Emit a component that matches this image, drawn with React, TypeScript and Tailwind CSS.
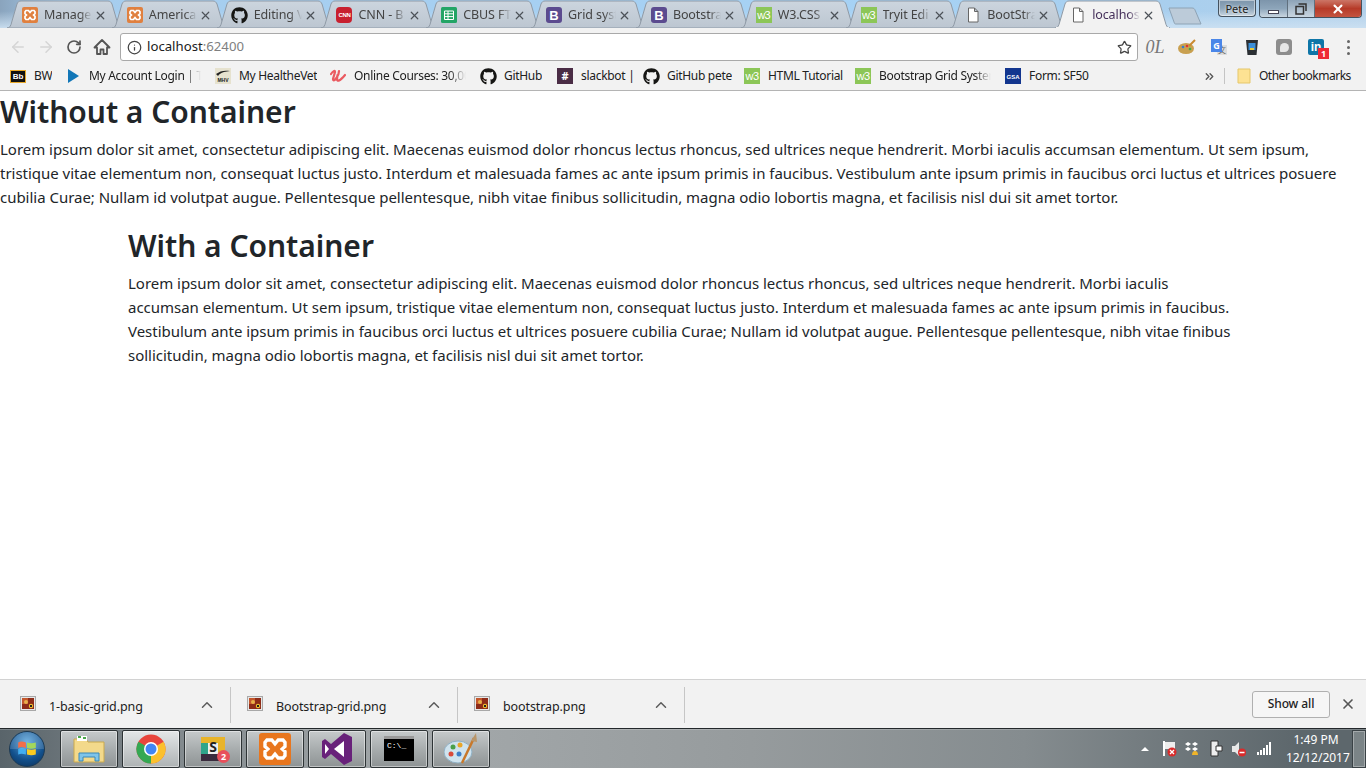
import React from "react";
import { ArrowLeft, ArrowRight, RotateCw, Info, Star, ChevronUp, X, ChevronsRight } from "lucide-react";
import { FaGithub } from "react-icons/fa";

const UI = "[font-family:'Noto_Sans','Liberation_Sans',sans-serif]";

function Xampp({ size = 16 }: { size?: number }) {
  return (
    <svg width={size} height={size} viewBox="0 0 16 16" className="shrink-0">
      <rect width="16" height="16" rx="2" fill="#e0803f" />
      <path d="M4 3.500h2.400L8 5.400 9.600 3.500H12l1 1.200v2L11.600 8l1.400 1.300v2l-1 1.200H9.600L8 10.600 6.400 12.500H4l-1-1.200v-2L4.400 8 3 6.700v-2z" fill="none" stroke="#fff" strokeWidth="1.700" />
    </svg>
  );
}
function Cnn() {
  return (
    <div className="w-4 h-4 bg-[#c8202f] rounded-sm flex items-center justify-center shrink-0 text-white text-[6px] font-bold leading-none tracking-tighter [font-family:'Liberation_Sans',sans-serif]">CNN</div>
  );
}
function Sheets() {
  return (
    <svg width="16" height="16" viewBox="0 0 16 16" className="shrink-0">
      <rect width="16" height="16" rx="1.500" fill="#23a566" />
      <path d="M3.500 4h9v8.500h-9zM3.500 6.800h9M3.500 9.600h9M7 4v8.500" fill="none" stroke="#fff" strokeWidth="1" />
    </svg>
  );
}
function Boot() {
  return (
    <div className="w-4 h-4 bg-[#5b4b8f] rounded-[3px] flex items-center justify-center shrink-0 text-white text-[13px] font-bold leading-none [font-family:'Liberation_Sans',sans-serif]">B</div>
  );
}
function W3() {
  return (
    <div className="w-4 h-4 bg-[#8cc657] flex items-center justify-center shrink-0 text-white text-[11px] leading-none tracking-tighter [font-family:'Liberation_Sans',sans-serif]">w3</div>
  );
}
function FileIco() {
  return (
    <svg width="16" height="16" viewBox="0 0 16 16" className="shrink-0">
      <path d="M3.500 1h6l3.500 3.500V15h-9.500z M9.500 1v3.500H13" fill="#fff" stroke="#666" strokeWidth="1" />
    </svg>
  );
}
function Git() {
  return <FaGithub size={17} className="shrink-0 text-[#161614]" />;
}

const tabs: { t: string; i: React.ReactNode }[] = [
  { t: "Manage", i: <Xampp /> },
  { t: "America", i: <Xampp /> },
  { t: "Editing V", i: <Git /> },
  { t: "CNN - B", i: <Cnn /> },
  { t: "CBUS FT", i: <Sheets /> },
  { t: "Grid syst", i: <Boot /> },
  { t: "Bootstra", i: <Boot /> },
  { t: "W3.CSS", i: <W3 /> },
  { t: "Tryit Edi", i: <W3 /> },
  { t: "BootStra", i: <FileIco /> },
];

function Tab({ t, i, active }: { t: string; i: React.ReactNode; active?: boolean }) {
  return (
    <div className="relative w-[115px] h-[28px] shrink-0 -ml-[10.2px] first:ml-0">
      <svg width="115" height="28" viewBox="0 0 115 28" className="absolute inset-0">
        <defs>
          <linearGradient id="tabfill" x1="0" y1="0" x2="0" y2="1">
            <stop offset="0" stopColor="#ccd5de" />
            <stop offset="1" stopColor="#bcc6d1" />
          </linearGradient>
        </defs>
        <path
          d="M0 28 C2 28 3 27 4 24.500 L10 4 C10.800 2 12 1 14 1 H101 C103 1 104 2 105 4 L111 24.500 C112 27 113 28 115 28 Z"
          fill={active ? "#f2f2f2" : "url(#tabfill)"}
          stroke="#8f9aa6"
          strokeWidth="1"
        />
        {active ? <rect x="1" y="27" width="113" height="2" fill="#f2f2f2" /> : null}
      </svg>
      <div className="relative h-full flex items-center pl-[15px] pr-[15px] pt-[2px]">
        <div className="w-4 flex justify-center shrink-0">{i}</div>
        <span className={`ml-[6px] w-[48px] overflow-hidden whitespace-nowrap text-[12.500px] tracking-[-0.1px] leading-[16px] [mask-image:linear-gradient(to_right,black_75%,transparent)] ${active ? "text-[#45305a]" : "text-[#444]"}`}>{t}</span>
        <X size={13} strokeWidth={2.200} className="ml-auto text-[#4c5258]" />
      </div>
    </div>
  );
}

function Mark({ w, i, t, fade }: { w: number; i: React.ReactNode; t: string; fade?: boolean }) {
  return (
    <div className="flex items-center shrink-0" style={{ width: w }}>
      <div className="w-4 h-4 flex items-center justify-center shrink-0">{i}</div>
      <span className={`ml-2 whitespace-nowrap text-[12px] tracking-[-0.3px] text-[#202020] overflow-hidden ${fade ? "flex-1 mr-[14px] [mask-image:linear-gradient(to_right,black_85%,transparent)]" : ""}`}>{t}</span>
    </div>
  );
}

function Bar({ name, w, pad }: { name: string; w: number; pad: number }) {
  return (
    <div className="flex items-center h-[36px] mt-[1px] border-r border-[#c6c6c6] shrink-0" style={{ width: w, paddingLeft: pad }}>
      <svg width="16" height="15" viewBox="0 0 16 15" className="mb-[3px] shrink-0">
        <rect x="0.500" y="0.500" width="15" height="14" fill="#e8e8e8" stroke="#a8a8a8" />
        <rect x="2" y="2" width="12" height="11" fill="#8e2c18" />
        <rect x="2" y="2" width="6" height="6" fill="#c4572c" />
        <circle cx="6" cy="6" r="2" fill="#e9b04a" />
        <circle cx="11" cy="10" r="2.200" fill="#f0c030" />
        <rect x="10" y="9" width="2" height="2" fill="#222" />
      </svg>
      <span className="ml-[13px] text-[12.500px] tracking-[-0.1px] text-[#1c1c1c] whitespace-nowrap mt-[5px]">{name}</span>
      <ChevronUp size={18} strokeWidth={2} className="ml-auto mr-[14px] text-[#5c5c5c]" />
    </div>
  );
}

function TaskBtn({ children, on }: { children: React.ReactNode; on?: boolean }) {
  return (
    <div className={`w-[58px] h-[38px] shrink-0 flex items-center justify-center rounded-[2px] border border-[#2e3436] shadow-[inset_0_0_0_1px_rgba(255,255,255,0.45)] ${on ? "bg-gradient-to-b from-[#e4e7e8] to-[#aeb3b4]" : "bg-gradient-to-b from-[#c6cacb] via-[#a8adae] to-[#8e9394]"}`}>
      {children}
    </div>
  );
}

export default function App() {
  return (
    <div className={`w-[1366px] h-[768px] overflow-hidden flex flex-col bg-white ${UI}`}>
      {/* tab strip */}
      <div className="relative h-[28px] shrink-0 flex pl-[7px] bg-[linear-gradient(to_bottom,rgba(166,208,243,0)_40%,rgba(205,225,242,0.9)),linear-gradient(to_right,#8aa4bd_0px,#a6cdee_60px,#a6d2f5_900px,#a9cfee_1170px,#b2d0ea_1366px)]">
        {tabs.map((x) => (
          <Tab key={x.t} t={x.t} i={x.i} />
        ))}
        <Tab t="localhost" i={<FileIco />} active />
        <svg width="36" height="20" viewBox="0 0 36 20" className="mt-[6px] -ml-[3px] shrink-0">
          <path d="M2 2 H25 C27 2 27.500 3 28 4 L34 18 H9 C8 18 7.500 18 7 16 Z" fill="#bccbd9" stroke="#8ea3b5" />
        </svg>
        <div className="absolute right-[4px] top-0 flex text-white">
          <div className="w-[38px] h-[17px] mr-[3px] rounded-b-[4px] border border-t-0 border-[#44525f] bg-gradient-to-b from-[#7d95ab] via-[#8da5ba] to-[#c9d6e1] shadow-[inset_0_0_0_1px_rgba(255,255,255,0.45)] flex items-center justify-center text-[11px] text-[#222] leading-none [text-shadow:0_0_3px_#fff]">Pete</div>
          <div className="flex h-[18px] rounded-b-[4px] border border-t-0 border-[#44525f] overflow-hidden">
            <div className="w-[28px] bg-gradient-to-b from-[#7d95ab] via-[#8da5ba] to-[#c9d6e1] border-r border-[#60707e] flex items-center justify-center">
              <div className="w-[11px] h-[4px] mt-[6px] bg-white border border-[#445]" />
            </div>
            <div className="w-[27px] bg-gradient-to-b from-[#8da3b7] to-[#c9d6e1] border-r border-[#60707e] flex items-center justify-center">
              <svg width="12" height="12" viewBox="0 0 12 12"><path d="M3.500 1h7.500v7M1 3.500h7.500v7.500H1z" fill="none" stroke="#333" strokeWidth="1.500" /></svg>
            </div>
            <div className="w-[46px] bg-gradient-to-b from-[#cc7566] via-[#b63a28] to-[#c45440] flex items-center justify-center">
              <X size={14} strokeWidth={3.500} />
            </div>
          </div>
        </div>
      </div>

      {/* toolbar */}
      <div className="h-[34px] shrink-0 bg-[#f2f2f2] flex items-center pl-[9px] pt-[4px]">
        <ArrowLeft size={18} strokeWidth={2} className="text-[#d5d5d5]" />
        <ArrowRight size={18} strokeWidth={2} className="ml-[10px] text-[#d5d5d5]" />
        <RotateCw size={16} strokeWidth={2.500} className="ml-[11px] text-[#555]" />
        <svg width="18" height="18" viewBox="0 0 18 18" className="ml-[11px]">
          <path d="M9 2 L1.500 9.500 H4 V16 H7.500 V11.500 H10.500 V16 H14 V9.500 H16.500 Z" fill="none" stroke="#555" strokeWidth="1.800" strokeLinejoin="round" />
        </svg>
        <div className="ml-[9px] w-[1018px] h-[28px] bg-white border border-[#a9a9a9] rounded-[3px] flex items-center pl-[6px]">
          <Info size={15} strokeWidth={2} className="text-[#444]" />
          <span className="ml-[5px] text-[13.200px] text-[#202020]">localhost<span className="text-[#808080]">:62400</span></span>
          <Star size={15} strokeWidth={2} className="ml-auto mr-[5px] text-[#444]" />
        </div>
        <div className="flex items-center ml-[1px]">
          <div className="w-[32px] text-center text-[18px] text-[#777] italic [font-family:'Liberation_Serif',serif] leading-none">0L</div>
          <div className="w-[32px] flex justify-center">
            <svg width="18" height="16" viewBox="0 0 18 16">
              <ellipse cx="8" cy="9.500" rx="8" ry="5.500" fill="#c9a050" />
              <circle cx="5" cy="8" r="1.300" fill="#3a7bc8" />
              <circle cx="9" cy="7" r="1.300" fill="#d33" />
              <circle cx="12" cy="10" r="1.300" fill="#4a4" />
              <path d="M11 7 L17 1" stroke="#c98a30" strokeWidth="2" />
            </svg>
          </div>
          <div className="w-[32px] flex justify-center">
            <div className="relative w-[16px] h-[16px]">
              <div className="absolute right-0 bottom-0 w-[10px] h-[10px] bg-[#ddd] text-[#666] text-[8px] leading-[10px] text-center [font-family:'Noto_Sans_CJK_SC',sans-serif]">文</div>
              <div className="absolute left-0 top-0 w-[11px] h-[13px] bg-[#4a86e8] text-white text-[9px] leading-[13px] text-center font-bold">G</div>
            </div>
          </div>
          <div className="w-[33px] flex justify-center">
            <svg width="14" height="17" viewBox="0 0 14 17">
              <path d="M1 1h12l-1.500 15h-9z" fill="#2b2f33" />
              <rect x="3.500" y="4" width="7" height="7" fill="#3b8fd8" />
              <rect x="5" y="9" width="4" height="2" fill="#e8c93a" />
            </svg>
          </div>
          <div className="w-[32px] flex justify-center">
            <div className="w-4 h-4 rounded-[3px] bg-[#8d8d8d] flex items-center justify-center">
              <div className="w-[9px] h-[9px] rounded-[50%_50%_50%_10%] bg-[#e6e6e6]" />
            </div>
          </div>
          <div className="relative w-[32px] flex justify-center">
            <div className="w-4 h-4 rounded-[2px] bg-[#0e76a8] text-white text-[12px] font-bold leading-[16px] text-center [font-family:'Liberation_Sans',sans-serif]">in</div>
            <div className="absolute left-[18px] top-[9px] w-[11px] h-[11px] bg-[#ee2b37] text-white text-[9px] leading-[11px] text-center font-bold">1</div>
          </div>
          <div className="ml-[15px] flex flex-col gap-[3px]">
            <div className="w-[3px] h-[3px] bg-[#666] rounded-full" />
            <div className="w-[3px] h-[3px] bg-[#666] rounded-full" />
            <div className="w-[3px] h-[3px] bg-[#666] rounded-full" />
          </div>
        </div>
      </div>

      {/* bookmarks */}
      <div className="h-[29px] shrink-0 bg-[#f2f2f2] border-b border-[#b4b4b4] flex items-center pl-[10px]">
        <Mark w={55} t="BW" i={<div className="w-4 h-[13px] bg-[#111] border border-[#e8a92a] text-white text-[8px] font-bold leading-[11px] text-center [font-family:'Liberation_Sans',sans-serif]">Bb</div>} />
        <Mark w={150} fade t="My Account Login | Ti" i={<svg width="12" height="14" viewBox="0 0 12 14"><path d="M1 0l11 7-11 7z" fill="#1277b8" /></svg>} />
        <Mark w={115} t="My HealtheVet" i={
          <div className="relative w-4 h-4 bg-[#e6e2cf] overflow-hidden">
            <svg width="16" height="9" viewBox="0 0 16 9" className="absolute left-0 top-0"><path d="M1 6 C5 3 9 2 15 3 L9 4 C6 5 4 6 3 8z" fill="#222" /></svg>
            <div className="absolute inset-x-0 bottom-0 text-[#222] text-[5px] font-bold leading-[7px] text-center [font-family:'Liberation_Sans',sans-serif]">MHV</div>
          </div>
        } />
        <Mark w={150} fade t="Online Courses: 30,000" i={
          <svg width="16" height="14" viewBox="0 0 16 14"><path d="M1 5 C3 2 5 1 5 3 L3 10 C3 13 6 11 8.500 5 L9 2 M7.500 6 L7 10 C7 13 10 12 15 6" fill="none" stroke="#ea5a60" strokeWidth="2.200" strokeLinecap="round" /></svg>
        } />
        <Mark w={77} t="GitHub" i={<Git />} />
        <Mark w={86} t="slackbot |" i={<div className="w-4 h-4 bg-[#4a2c45] text-white text-[11px] font-bold leading-4 text-center">#</div>} />
        <Mark w={101} t="GitHub pete" i={<Git />} />
        <Mark w={111} t="HTML Tutorial" i={<W3 />} />
        <Mark w={150} fade t="Bootstrap Grid System" i={<W3 />} />
        <Mark w={198} t="Form: SF50" i={<div className="w-4 h-4 bg-[#12358e] text-white text-[6px] font-bold leading-[18px] text-center overflow-hidden [font-family:'Liberation_Sans',sans-serif]">GSA</div>} />
        <ChevronsRight size={13} strokeWidth={2.500} className="text-[#555]" />
        <div className="ml-[8px] h-[16px] border-l border-[#c4c4c4]" />
        <svg width="14" height="16" viewBox="0 0 14 16" className="ml-[12px]"><path d="M1 1h12v14H1z" fill="#fde293" stroke="#e5c76b" /></svg>
        <span className="ml-[8px] text-[12px] tracking-[-0.5px] text-[#202020] whitespace-nowrap">Other bookmarks</span>
      </div>

      {/* page */}
      <main className="flex-1 min-h-0 text-[#212529] text-[15px] tracking-[-0.024px] leading-[24px]">
        <h2 className="text-[30px] font-semibold leading-[38.400px] pt-[2px] mb-[6px] mt-0">Without a Container</h2>
        <p className="mb-[16px]">
          Lorem ipsum dolor sit amet, consectetur adipiscing elit. Maecenas euismod dolor rhoncus lectus rhoncus, sed ultrices neque hendrerit. Morbi iaculis accumsan elementum. Ut sem ipsum, tristique vitae elementum non, consequat luctus justo. Interdum et malesuada fames ac ante ipsum primis in faucibus. Vestibulum ante ipsum primis in faucibus orci luctus et ultrices posuere cubilia Curae; Nullam id volutpat augue. Pellentesque pellentesque, nibh vitae finibus sollicitudin, magna odio lobortis magna, et facilisis nisl dui sit amet tortor.
        </p>
        <div className="w-[1110px] mx-auto">
          <h2 className="text-[30px] font-semibold leading-[38.400px] pt-[2px] mb-[5px]">With a Container</h2>
          <p>
            Lorem ipsum dolor sit amet, consectetur adipiscing elit. Maecenas euismod dolor rhoncus lectus rhoncus, sed ultrices neque hendrerit. Morbi iaculis accumsan elementum. Ut sem ipsum, tristique vitae elementum non, consequat luctus justo. Interdum et malesuada fames ac ante ipsum primis in faucibus. Vestibulum ante ipsum primis in faucibus orci luctus et ultrices posuere cubilia Curae; Nullam id volutpat augue. Pellentesque pellentesque, nibh vitae finibus sollicitudin, magna odio lobortis magna, et facilisis nisl dui sit amet tortor.
          </p>
        </div>
      </main>

      {/* download shelf */}
      <div className="h-[49px] shrink-0 bg-[#f2f2f2] border-t border-[#d2d2d2] flex items-center">
        <Bar name="1-basic-grid.png" w={231} pad={20} />
        <Bar name="Bootstrap-grid.png" w={227} pad={16} />
        <Bar name="bootstrap.png" w={227} pad={16} />
        <div className="ml-auto w-[78px] h-[27px] bg-[#f6f6f6] border border-[#b0b0b0] rounded-[3px] flex items-center justify-center text-[12px] font-medium tracking-[-0.1px] text-[#222]">Show all</div>
        <X size={16} strokeWidth={2.500} className="mx-[10px] text-[#555]" />
      </div>

      {/* taskbar */}
      <div className="h-[40px] shrink-0 border-t border-[#23282b] flex items-center shadow-[inset_0_1px_0_rgba(255,255,255,0.2)] bg-[linear-gradient(to_right,#59646a,#7c8488_10%,#a4a9ab_30%,#969b9d_55%,#858c8f_75%,#5d676c_95%)]">
        <div className="relative ml-[9px] mr-[15px] w-[36px] h-[36px] rounded-full shrink-0 border border-[#1b3a55] bg-[radial-gradient(circle_at_50%_30%,#5ba6de,#12508c_60%,#0d2f55)] flex items-center justify-center overflow-hidden">
          <svg width="22" height="22" viewBox="0 0 20 20">
            <path d="M2 4c2-1 4-1 7 0v5c-3-1-5-1-7 0z" fill="#f0552b" />
            <path d="M10 4c3 1 5 1 8 0v5c-3 1-5 1-8 0z" fill="#93d13f" />
            <path d="M2 10c2-1 4-1 7 0v5c-3-1-5-1-7 0z" fill="#42aef0" />
            <path d="M10 10c3 1 5 1 8 0v5c-3 1-5 1-8 0z" fill="#fbcb1f" />
          </svg>
          <div className="absolute inset-x-0 top-0 h-1/2 bg-white/15" />
        </div>
        <div className="flex gap-[4px]">
          <TaskBtn>
            <svg width="32" height="30" viewBox="0 0 32 30">
              <path d="M1 5h12l2 3h16v20H1z" fill="#f3d98b" stroke="#c9a94f" />
              <rect x="4" y="2" width="10" height="5" fill="#fff" />
              <path d="M5 2h3v2H5zM10 3h3v2h-3z" fill="#4aa84a" />
              <path d="M6 27v-8h20v8h-4v-4H10v4z" fill="#7fc4ea" stroke="#3a88b8" />
            </svg>
          </TaskBtn>
          <TaskBtn on>
            <svg width="30" height="30" viewBox="0 0 30 30">
              <circle cx="15" cy="15" r="14.500" fill="#e8453c" />
              <path d="M15 15 L27.600 7.700 A14.500 14.500 0 0 1 15 29.500z" fill="#fbc02d" />
              <path d="M15 15 L15 29.500 A14.500 14.500 0 0 1 2.400 7.700z" fill="#34a853" />
              <circle cx="15" cy="15" r="7" fill="#fff" />
              <circle cx="15" cy="15" r="5.500" fill="#4285f4" />
            </svg>
          </TaskBtn>
          <TaskBtn>
            <div className="relative w-[26px] h-[28px]">
              <svg width="26" height="26" viewBox="0 0 26 26" className="absolute top-0 left-0">
                <path d="M1 2h7v24H1z" fill="#2fa58a" />
                <path d="M1 2h24v6H1z" fill="#e8b42a" />
                <path d="M18 2h7v24h-7z" fill="#e8b42a" />
                <path d="M1 19h24v7H1z" fill="#3a2c3e" />
                <path d="M8 8h10v11H8z" fill="#eee" />
              </svg>
              <div className="absolute inset-x-0 top-[5px] text-center text-[14px] font-bold text-[#222] leading-none">S</div>
              <div className="absolute -right-[4px] bottom-0 w-[13px] h-[13px] rounded-full bg-[#e8505b] text-white text-[9px] leading-[13px] text-center font-bold">2</div>
            </div>
          </TaskBtn>
          <TaskBtn>
            <svg width="32" height="32" viewBox="0 0 16 16">
              <rect width="16" height="16" rx="1.500" fill="#e8761e" />
              <path d="M4 3.500h2.400L8 5.400 9.600 3.500H12l1 1.200v2L11.600 8l1.400 1.300v2l-1 1.200H9.600L8 10.600 6.400 12.500H4l-1-1.200v-2L4.400 8 3 6.700v-2z" fill="none" stroke="#fff" strokeWidth="1.700" />
            </svg>
          </TaskBtn>
          <TaskBtn>
            <svg width="30" height="32" viewBox="0 0 30 32">
              <path d="M22 0 L30 4 V28 L22 32 L9 21 L3 26 L0 24 V8 L3 6 L9 11z" fill="#68217a" />
              <path d="M22 8 V24 L12 16z M3 11 L7 16 L3 21z" fill="#fff" />
            </svg>
          </TaskBtn>
          <TaskBtn>
            <div className="w-[30px] h-[25px] bg-black border-t-[3px] border-[#9a9a9a] text-white text-[8px] leading-none pt-[3px] pl-[3px] [font-family:'Liberation_Mono',monospace]">C:\_</div>
          </TaskBtn>
          <TaskBtn>
            <svg width="34" height="32" viewBox="0 0 34 32">
              <ellipse cx="14" cy="19" rx="14" ry="11" fill="#cfe3ee" stroke="#8fb0c4" />
              <circle cx="7" cy="21" r="2.500" fill="#d94a3a" />
              <circle cx="9" cy="14" r="2.500" fill="#4aa04a" />
              <circle cx="16" cy="12" r="2.500" fill="#e8a52a" />
              <circle cx="15" cy="21" r="2.500" fill="#3d7fc8" />
              <path d="M18 30 L30 5" stroke="#c8782a" strokeWidth="2.500" />
              <path d="M27 8 L32 0 L33 9z" fill="#b9966a" />
            </svg>
          </TaskBtn>
        </div>
        <div className="ml-auto flex items-center text-white">
          <div className="w-0 h-0 border-x-[4px] border-x-transparent border-b-[4px] border-b-white mr-[12px]" />
          <svg width="17" height="17" viewBox="0 0 17 17" className="mr-[6px]">
            <path d="M3 1v15" stroke="#fff" strokeWidth="2" />
            <path d="M4 2h10v7H4z" fill="#eee" />
            <circle cx="11" cy="12" r="4.500" fill="#d92b2b" />
            <path d="M9 10l4 4M13 10l-4 4" stroke="#fff" strokeWidth="1.300" />
          </svg>
          <svg width="18" height="16" viewBox="0 0 18 16" className="mr-[7px]">
            <path d="M1 3l3-2 3 2-3 2zM8 3l3-2 3 2-3 2zM1 8l3-2 3 2-3 2zM8 8l3-2 3 2-3 2z" fill="#fff" />
            <path d="M8 14a3 4 0 0 1 6 0z" fill="#f0b429" />
          </svg>
          <svg width="14" height="17" viewBox="0 0 14 17" className="mr-[8px]">
            <path d="M2 1h7v15H2z" fill="#eee" stroke="#333" />
            <path d="M7 6h6v5H7z" fill="#fff" stroke="#333" />
          </svg>
          <svg width="16" height="16" viewBox="0 0 16 16" className="mr-[9px]">
            <path d="M1 5h3l4-4v14l-4-4H1z" fill="#e8e8e8" />
            <circle cx="11" cy="11.500" r="4" fill="#d92b2b" />
            <path d="M8.500 11.500h5" stroke="#fff" strokeWidth="1.500" />
          </svg>
          <svg width="16" height="14" viewBox="0 0 16 14" className="mr-[14px]">
            <path d="M1 10h2v3H1zM4 8h2v5H4zM7 6h2v7H7zM10 3h2v10h-2zM13 0h2v13h-2z" fill="#fff" />
          </svg>
          <div className="w-[60px] text-center text-[12px] leading-[18px] whitespace-nowrap">
            <div>1:49 PM</div>
            <div>12/12/2017</div>
          </div>
          <div className="ml-[6px] mr-0 w-[14px] h-[38px] border border-[#3a4246] bg-[#7b8487] shadow-[inset_0_0_0_1px_rgba(255,255,255,0.3)]" />
        </div>
      </div>
    </div>
  );
}
